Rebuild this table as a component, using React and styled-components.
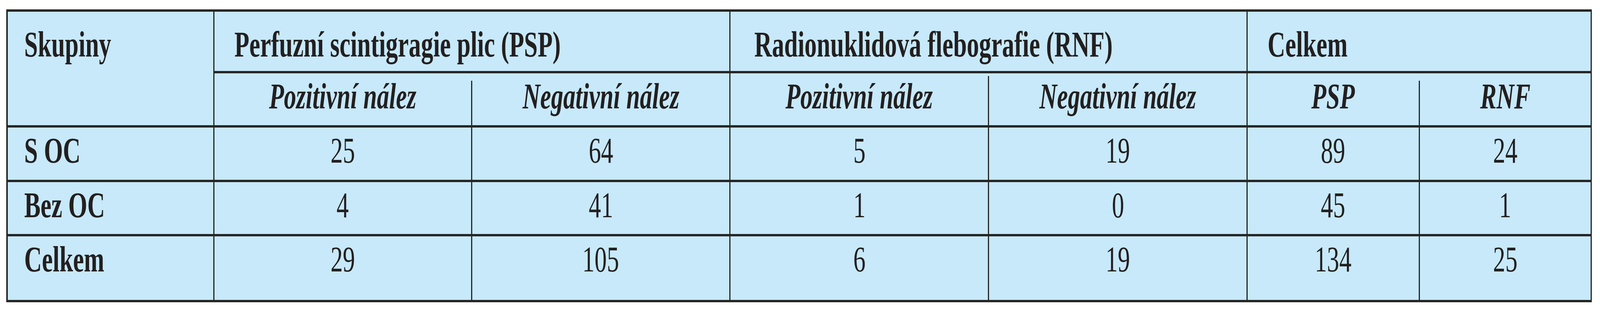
import React, { useEffect, useState } from "react";
import styled, { createGlobalStyle } from "styled-components";

const line = "#262626";
const blue = "#c7e9fa";
// the table was laid out for a 6091px wide page; narrower viewports squeeze it sideways
const DESIGN_WIDTH = 6091;

const Global = createGlobalStyle`
  html, body { margin: 0; padding: 0; background: #fff; overflow: hidden; }
  body {
    font-family: "Liberation Serif", "Times New Roman", serif;
    color: #231f20;
  }
`;

const Page = styled.div`
  padding: 24px calc(31px * var(--sx, 1)) 0 calc(24px * var(--sx, 1));
`;

const Table = styled.div`
  display: grid;
  grid-template-columns:
    minmax(0, 787fr) minmax(0, 981fr) minmax(0, 983fr) minmax(0, 985fr)
    minmax(0, 984fr) minmax(0, 655fr) minmax(0, 655fr);
  grid-template-rows: 158px 139px 140px 139px 169px;
  box-sizing: border-box;
  border-left: 4px solid ${line};
  border-top: 6px solid ${line};
  background: ${blue};
`;

const Cell = styled.div`
  box-sizing: border-box;
  border-right: 3px solid ${line};
  border-bottom: 6px solid ${line};
  font-size: 93px;
  line-height: 93px;
  padding-top: 12px;
  text-align: center;
  white-space: nowrap;
`;

const Text = styled.span`
  display: inline-block;
  transform: scaleX(var(--sx, 1));
  transform-origin: ${(p) => (p.$left ? "left center" : "center center")};
`;

const Corner = styled(Cell)`
  grid-row: span 2;
  font-weight: bold;
  text-align: left;
  padding: 37px 0 0 calc(62px * var(--sx, 1));
`;

const GroupHead = styled(Cell)`
  grid-column: span 2;
  font-weight: bold;
  text-align: left;
  padding: 37px 0 0 calc(${(p) => p.$indent}px * var(--sx, 1));
`;

const SubHead = styled(Cell)`
  font-weight: bold;
  font-style: italic;
  ${(p) =>
    p.$gap != null &&
    `
    border-right-color: transparent;
    background: linear-gradient(${line}, ${line}) right bottom / 3px calc(100% - ${p.$gap}px) no-repeat border-box, ${blue};
  `}
`;

const RowLabel = styled(Cell)`
  font-weight: bold;
  text-align: left;
  padding-left: calc(62px * var(--sx, 1));
`;

const Num = styled(Cell)``;

const rows = [
  { label: "S OC", values: [25, 64, 5, 19, 89, 24] },
  { label: "Bez OC", values: [4, 41, 1, 0, 45, 1] },
  { label: "Celkem", values: [29, 105, 6, 19, 134, 25] },
];

function useSqueeze() {
  const get = () => Math.min(1, window.innerWidth / DESIGN_WIDTH);
  const [sx, setSx] = useState(get);
  useEffect(() => {
    const onResize = () => setSx(get());
    window.addEventListener("resize", onResize);
    return () => window.removeEventListener("resize", onResize);
  }, []);
  return sx;
}

export default function App() {
  const sx = useSqueeze();
  return (
    <Page style={{ "--sx": sx }}>
      <Global />
      <Table>
        <Corner><Text $left>Skupiny</Text></Corner>
        <GroupHead $indent={75}><Text $left>Perfuzní scintigragie plic (PSP)</Text></GroupHead>
        <GroupHead $indent={90}><Text $left>Radionuklidová flebografie (RNF)</Text></GroupHead>
        <GroupHead $indent={76}><Text $left>Celkem</Text></GroupHead>

        <SubHead $gap={19}><Text>Pozitivní nález</Text></SubHead>
        <SubHead><Text>Negativní nález</Text></SubHead>
        <SubHead $gap={7}><Text>Pozitivní nález</Text></SubHead>
        <SubHead><Text>Negativní nález</Text></SubHead>
        <SubHead $gap={19}><Text>PSP</Text></SubHead>
        <SubHead><Text>RNF</Text></SubHead>

        {rows.map((r) => (
          <React.Fragment key={r.label}>
            <RowLabel><Text $left>{r.label}</Text></RowLabel>
            {r.values.map((v, i) => (
              <Num key={i}><Text>{v}</Text></Num>
            ))}
          </React.Fragment>
        ))}
      </Table>
    </Page>
  );
}
